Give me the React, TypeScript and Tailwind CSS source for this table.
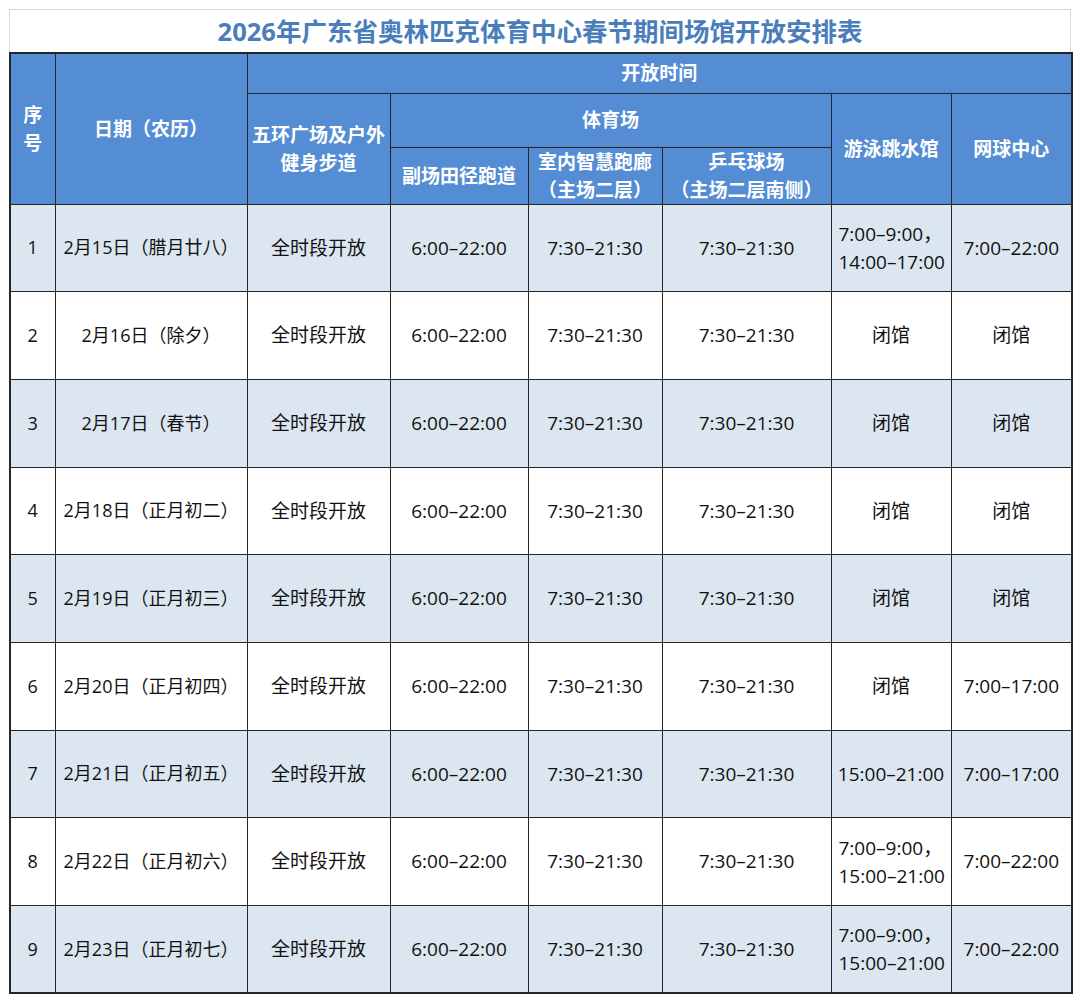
const rows = [
  { n: "1", d: "2月15日（腊月廿八）", sw: ["7:00–9:00，", "14:00–17:00"], tn: "7:00–22:00" },
  { n: "2", d: "2月16日（除夕）", sw: ["闭馆"], tn: "闭馆" },
  { n: "3", d: "2月17日（春节）", sw: ["闭馆"], tn: "闭馆" },
  { n: "4", d: "2月18日（正月初二）", sw: ["闭馆"], tn: "闭馆" },
  { n: "5", d: "2月19日（正月初三）", sw: ["闭馆"], tn: "闭馆" },
  { n: "6", d: "2月20日（正月初四）", sw: ["闭馆"], tn: "7:00–17:00" },
  { n: "7", d: "2月21日（正月初五）", sw: ["15:00–21:00"], tn: "7:00–17:00" },
  { n: "8", d: "2月22日（正月初六）", sw: ["7:00–9:00，", "15:00–21:00"], tn: "7:00–22:00" },
  { n: "9", d: "2月23日（正月初七）", sw: ["7:00–9:00，", "15:00–21:00"], tn: "7:00–22:00" },
];

const font = { fontFamily: '"Open Sans", "Noto Sans CJK SC", sans-serif' };

function Cell({ children, className = "" }: { children: React.ReactNode; className?: string }) {
  return (
    <td className={"border-[1.5px] border-[#262626] text-center align-middle " + className}>
      {children}
    </td>
  );
}

function Th({ children, className = "", ...rest }: { children: React.ReactNode; className?: string; colSpan?: number; rowSpan?: number }) {
  return (
    <th
      {...rest}
      className={"border-[1.5px] border-[#262626] bg-[#548dd4] text-center align-middle text-[19px] font-bold leading-[28px] text-white " + className}
    >
      {children}
    </th>
  );
}

export default function App() {
  return (
    <div className="min-h-[1002px] bg-white pl-[9px] pt-[9px]" style={font}>
      <div className="w-[1062px]">
        <div className="flex h-[43px] items-center justify-center border-x border-t border-[#d9d9d9] text-[25.5px] font-bold text-[#4a7ebb]">
          2026年广东省奥林匹克体育中心春节期间场馆开放安排表
        </div>
        <table className="w-[1062px] table-fixed border-collapse border-2 border-[#262626]">
          <colgroup>
            <col className="w-[45px]" />
            <col className="w-[192px]" />
            <col className="w-[143px]" />
            <col className="w-[138px]" />
            <col className="w-[134px]" />
            <col className="w-[169px]" />
            <col className="w-[120px]" />
            <col className="w-[121px]" />
          </colgroup>
          <thead>
            <tr className="h-[40px]">
              <Th rowSpan={3}>
                序<br />号
              </Th>
              <Th rowSpan={3}>日期（农历）</Th>
              <Th colSpan={6}>开放时间</Th>
            </tr>
            <tr className="h-[54px]">
              <Th rowSpan={2}>
                五环广场及户外
                <br />
                健身步道
              </Th>
              <Th colSpan={3}>体育场</Th>
              <Th rowSpan={2}>游泳跳水馆</Th>
              <Th rowSpan={2}>网球中心</Th>
            </tr>
            <tr className="h-[52px]">
              <Th>副场田径跑道</Th>
              <Th>
                室内智慧跑廊
                <br />
                （主场二层）
              </Th>
              <Th>
                乒乓球场
                <br />
                （主场二层南侧）
              </Th>
            </tr>
          </thead>
          <tbody className="text-[#111]">
            {rows.map((r, i) => (
              <tr key={r.n} className={"h-[87.7px] " + (i % 2 === 0 ? "bg-[#dce6f1]" : "bg-white")}>
                <Cell className="text-[18px]">{r.n}</Cell>
                <Cell className="text-[18px]">{r.d}</Cell>
                <Cell className="text-[19px]">全时段开放</Cell>
                <Cell className="text-[19px]">6:00–22:00</Cell>
                <Cell className="text-[19px]">7:30–21:30</Cell>
                <Cell className="text-[19px]">7:30–21:30</Cell>
                {r.sw.length > 1 ? (
                  <Cell className="pl-[7px] text-left text-[19px] leading-[28px]">
                    {r.sw[0]}
                    <br />
                    {r.sw[1]}
                  </Cell>
                ) : (
                  <Cell className="text-[19px]">{r.sw[0]}</Cell>
                )}
                <Cell className="text-[19px]">{r.tn}</Cell>
              </tr>
            ))}
          </tbody>
        </table>
      </div>
    </div>
  );
}
